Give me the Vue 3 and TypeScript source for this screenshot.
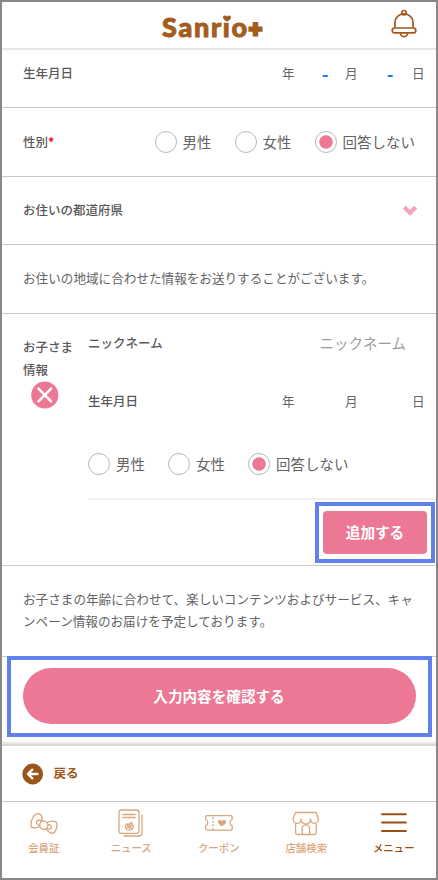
<script setup lang="ts">
import { ref } from 'vue'

interface Choice {
  id: string
  label: string
}

const choices: Choice[] = [
  { id: 'male', label: '男性' },
  { id: 'female', label: '女性' },
  { id: 'none', label: '回答しない' },
]

const gender = ref<string>('none')
const childGender = ref<string>('none')
</script>

<template>
  <div class="screen">
    <header class="header">
      <h1 class="logo">
        <span class="logo-word">Sanrio</span><span class="logo-plus">+</span>
        <svg class="logo-heart" viewBox="0 0 10 9" width="10" height="9">
          <rect x="0.5" y="0" width="9" height="7.6" fill="#fff" />
          <path d="M5 6.800C2.200 5 1 3.900 1 2.300 1 .2 4-.3 5 1.600 6-.3 9 .2 9 2.300 9 3.900 7.800 5 5 6.800z" fill="#a45b1e" />
        </svg>
      </h1>
      <svg class="bell" viewBox="0 0 28 30" width="28" height="30" fill="none" stroke="#a4561a" stroke-width="1.7">
        <circle cx="14" cy="3.700" r="2.200" />
        <path d="M5 19v-5.500a9 8.600 0 0 1 18 0V19" />
        <rect x="2.200" y="19" width="23.600" height="4.800" rx="2.400" />
        <path d="M10.500 24.200a3.500 3.500 0 0 0 7 0" />
      </svg>
    </header>

    <section class="row row-birth">
      <span class="label">生年月日</span>
      <div class="date">
        <span>年</span><i>-</i><span>月</span><i>-</i><span>日</span>
      </div>
    </section>

    <section class="row row-gender">
      <span class="label">性別<b class="required">*</b></span>
      <div class="radios">
        <button v-for="c in choices" :key="c.id" class="radio" @click="gender = c.id">
          <span class="dot" :class="{ on: gender === c.id }"></span>{{ c.label }}
        </button>
      </div>
    </section>

    <section class="row row-pref">
      <span class="label">お住いの都道府県</span>
      <svg class="chevron" viewBox="0 0 16 12" width="16" height="12">
        <path d="M2.300 2.200 8 7.800 13.700 2.200" fill="none" stroke="#f3a3ba" stroke-width="4.200" />
      </svg>
    </section>

    <section class="row row-note">
      <p class="note">お住いの地域に合わせた情報をお送りすることがございます。</p>
    </section>

    <section class="child">
      <div class="child-side">
        <span class="label">お子さま情報</span>
        <svg class="remove" viewBox="0 0 28 28" width="28" height="28">
          <circle cx="13.800" cy="14" r="13.600" fill="#ec7895" />
          <path d="M7.500 7.700 20.100 20.300M20.100 7.700 7.500 20.300" stroke="#fff" stroke-width="2.500" stroke-linecap="round" />
        </svg>
      </div>
      <div class="child-main">
        <div class="child-name">
          <span class="label">ニックネーム</span>
          <span class="placeholder">ニックネーム</span>
        </div>
        <div class="child-birth">
          <span class="label">生年月日</span>
          <div class="date"><span>年</span><i></i><span>月</span><i></i><span>日</span></div>
        </div>
        <div class="radios child-radios">
          <button v-for="c in choices" :key="c.id" class="radio" @click="childGender = c.id">
            <span class="dot" :class="{ on: childGender === c.id }"></span>{{ c.label }}
          </button>
        </div>
        <div class="add-area">
          <div class="add-mark"><button class="add">追加する</button></div>
        </div>
      </div>
    </section>

    <section class="row row-info">
      <p class="note">お子さまの年齢に合わせて、楽しいコンテンツおよびサービス、キャンペーン情報のお届けを予定しております。</p>
    </section>

    <div class="confirm-area">
      <div class="confirm-mark"><button class="confirm">入力内容を確認する</button></div>
    </div>

    <div class="back">
      <svg viewBox="0 0 22 22" width="22" height="22">
        <circle cx="10.700" cy="11" r="10.400" fill="#9c541b" />
        <path d="M15.500 11H6.500M10.300 6.600 5.900 11l4.400 4.400" fill="none" stroke="#fff" stroke-width="2.300" stroke-linecap="round" stroke-linejoin="round" />
      </svg>
      <span>戻る</span>
    </div>

    <nav class="tabs">
      <a class="tab">
        <svg viewBox="0 0 32 30" width="32" height="30">
          <path d="M13.900 13.300C14.900 8.800 13 5.300 9.700 5.700 5.800 6.300 2.800 12 2.900 17c.1 3.600 4.300 3.700 8.600 1.600" />
          <path d="M19.200 14.500C22.500 12.700 28.400 12.200 28.900 15.200c.5 3.600-1 8.500-3.200 9.700-2.600 1.200-6-1.200-7-3.900" />
          <circle cx="15.800" cy="17.300" r="4.100" />
          <path d="M13.300 13.900c-.5-1.900-2.700-2.500-4.100-1.200-1.500 1.500-.8 4.200 2.400 4.500M19.900 16.800c2.100-.5 3.700.7 3.400 2.500-.3 1.900-2.400 2.400-4.300 1" />
        </svg>
        <span>会員証</span>
      </a>
      <a class="tab">
        <svg viewBox="0 0 32 30" width="32" height="30">
          <rect x="4" y="2" width="20" height="23.300" rx="2.200" />
          <path d="M27 7v18a3 3 0 0 1-3 3H9M7.800 6.500h12.400M7.800 9.500h12.400" />
          <path d="M10.500 17.500c1-2 2.500-1.700 3.300-.9l2.900-2.300.4 2.300c1.800 1 1.700 3.800-.6 4.900-2 1-4.700.8-5.500-.8-.5-1-.9-2.200-.5-3.200zM12.500 17.500l2.200 3m0-4 1.500 3.500m-4.700 0 5.200-2.500" />
        </svg>
        <span>ニュース</span>
      </a>
      <a class="tab">
        <svg viewBox="0 0 32 30" width="32" height="30">
          <path d="M4.200 7.600h23.400a1.600 1.600 0 0 1 1.600 1.600v2.300a3.400 3.400 0 0 0 0 6.400v2.700a1.600 1.600 0 0 1-1.600 1.600H4.200a1.600 1.600 0 0 1-1.600-1.600v-2.700a3.400 3.400 0 0 0 0-6.400V9.200a1.600 1.600 0 0 1 1.600-1.600z" />
          <path d="M10 9.500v12" stroke-dasharray="1.200 2.400" />
          <path class="solid" d="M19 18.500c-2.900-2.100-4.100-3.200-4.100-4.700 0-2.200 3-2.600 4.100-.6 1.100-2 4.100-1.600 4.100.6 0 1.500-1.200 2.600-4.100 4.700z" />
        </svg>
        <span>クーポン</span>
      </a>
      <a class="tab">
        <svg viewBox="0 0 32 30" width="32" height="30">
          <path d="M6.300 4.500h19q1 0 1.300 1L28.300 10.500a3.900 3.900 0 0 1-7.700 1.700v-1.200 1.200a4.800 4.800 0 0 1-9.400 0v-1.200 1.200A3.900 3.900 0 0 1 3.300 10.500L5 5.500q.3-1 1.300-1z" />
          <path d="M5.600 16.500v8.200q0 1.800 1.800 1.800h17q1.800 0 1.800-1.800v-8.200M12.200 26.300v-5.800a3.700 3.700 0 0 1 7.400 0v5.800" />
        </svg>
        <span>店舗検索</span>
      </a>
      <a class="tab active">
        <svg viewBox="0 0 32 30" width="32" height="30">
          <path d="M4 6.200h23.800M4 14.600h23.800M4 23h23.800" />
        </svg>
        <span>メニュー</span>
      </a>
    </nav>
  </div>
</template>

<style>
body {
  background: #fff;
}
</style>

<style scoped>
.screen {
  position: relative;
  box-sizing: border-box;
  width: 438px;
  height: 880px;
  overflow: hidden;
  background: #fff;
  color: #646464;
  font-family: "Noto Sans CJK JP", sans-serif;
  font-size: 12.6px;
  line-height: 22.5px;
}
.screen::after {
  content: "";
  position: absolute;
  inset: 0;
  border: 2px solid #8b8788;
  pointer-events: none;
}
button {
  padding: 0;
  border: 0;
  background: none;
  color: inherit;
  font: inherit;
}
p {
  margin: 0;
}
.header {
  box-sizing: border-box;
  display: flex;
  align-items: flex-start;
  justify-content: space-between;
  height: 50px;
  padding: 9px 20px 0 162px;
  border-bottom: 2px solid #e6e6e6;
}
.logo {
  position: relative;
  display: flex;
  margin: 0;
  color: #a45b1e;
  font-family: Lato, sans-serif;
  font-size: 27px;
  font-weight: 900;
  line-height: 36px;
}
.logo-word {
  letter-spacing: 1.7px;
  -webkit-text-stroke: 0.9px #a45b1e;
}
.logo-plus {
  margin-left: 0;
  font-size: 23px;
  line-height: 38px;
  -webkit-text-stroke: 2.8px #a45b1e;
}
.logo-heart {
  position: absolute;
  left: 59.5px;
  top: 6px;
}
.row {
  box-sizing: border-box;
  display: flex;
  align-items: center;
  justify-content: space-between;
  padding-left: 23px;
  border-bottom: 1px solid #c9c9c9;
}
.label {
  color: #585858;
  font-size: 12.5px;
  font-weight: 500;
}
.row-birth {
  height: 58px;
  padding: 0 13px 10px 23px;
}
.date {
  display: grid;
  grid-template-columns: 13px 50px 13px 54px 13px;
}
.date i {
  padding-left: 10px;
  color: #1a7be8;
  font-size: 18px;
  font-style: normal;
  font-weight: 700;
  text-align: center;
}
.row-gender {
  height: 69px;
  padding-right: 23px;
}
.required {
  color: #f01010;
}
.radios {
  display: flex;
  gap: 23px;
}
.radio {
  display: flex;
  align-items: center;
  gap: 6px;
  font-size: 14.5px;
}
.dot {
  box-sizing: border-box;
  width: 22px;
  height: 22px;
  border: 1px solid #b8b8b8;
  border-radius: 50%;
}
.dot.on {
  background: radial-gradient(circle, #ec7895 6.3px, #fff 7.1px);
}
.row-pref {
  height: 68px;
  padding-right: 20px;
}
.row-note {
  height: 69px;
  padding-bottom: 1px;
}
.child {
  box-sizing: border-box;
  display: flex;
  height: 252px;
  padding-left: 23px;
  border-bottom: 1px solid #c9c9c9;
}
.child-side {
  display: flex;
  flex-direction: column;
  width: 65px;
  padding-top: 22px;
}
.child-side .label {
  width: 52px;
}
.remove {
  margin: 0 0 0 8px;
}
.child-main {
  flex: 1;
}
.child-name,
.child-birth {
  display: flex;
  justify-content: space-between;
}
.child-name {
  padding: 18px 32px 0 0;
}
.placeholder {
  color: #9c9c9c;
  font-size: 14.5px;
}
.child-birth {
  padding: 35px 13px 0 0;
}
.child-radios {
  padding-top: 41px;
}
.add-area {
  display: flex;
  justify-content: flex-end;
  margin-top: 22px;
  padding: 2px 3px 0 0;
  border-top: 2px solid #efefef;
}
.add-mark {
  padding: 5px 4px;
  border: 4px solid #6080ee;
}
.add {
  display: block;
  width: 104px;
  height: 43px;
  border-radius: 4px;
  background: #ec7895;
  color: #fff;
  font-size: 14.6px;
  font-weight: 700;
}
.row-info {
  height: 91px;
  padding: 0 20px 2px 23px;
}
.confirm-area {
  height: 90px;
  margin-top: -1px;
  padding: 0 6px 0 7px;
  box-sizing: border-box;
  background: linear-gradient(transparent 94%, #cecece 100%);
}
.confirm-mark {
  box-sizing: border-box;
  height: 81px;
  padding: 8px 11.5px;
  border: 4px solid #6080ee;
  background: #fff;
}
.confirm {
  display: block;
  width: 393px;
  height: 56px;
  border-radius: 28px;
  background: #ec7895;
  color: #fff;
  font-size: 14.6px;
  font-weight: 700;
}
.back {
  box-sizing: border-box;
  display: flex;
  align-items: center;
  gap: 9.5px;
  height: 56px;
  padding-left: 22px;
  border-bottom: 1px solid #cfc5bf;
  color: #9c541b;
  font-size: 12.5px;
  font-weight: 700;
}
.tabs {
  display: grid;
  grid-template-columns: repeat(5, 87.5px);
}
.tab {
  display: flex;
  flex-direction: column;
  align-items: center;
  padding-top: 6px;
  color: #d9a77d;
  font-size: 10.4px;
  font-weight: 500;
}
.tab span {
  margin-top: -1px;
}
.tab svg {
  fill: none;
  stroke: currentColor;
  stroke-width: 1.3;
  stroke-linecap: round;
  stroke-linejoin: round;
}
.tab .solid {
  fill: currentColor;
  stroke: none;
}
.tab.active {
  color: #9c4e12;
}
.tab.active svg {
  stroke-width: 2;
}
</style>
